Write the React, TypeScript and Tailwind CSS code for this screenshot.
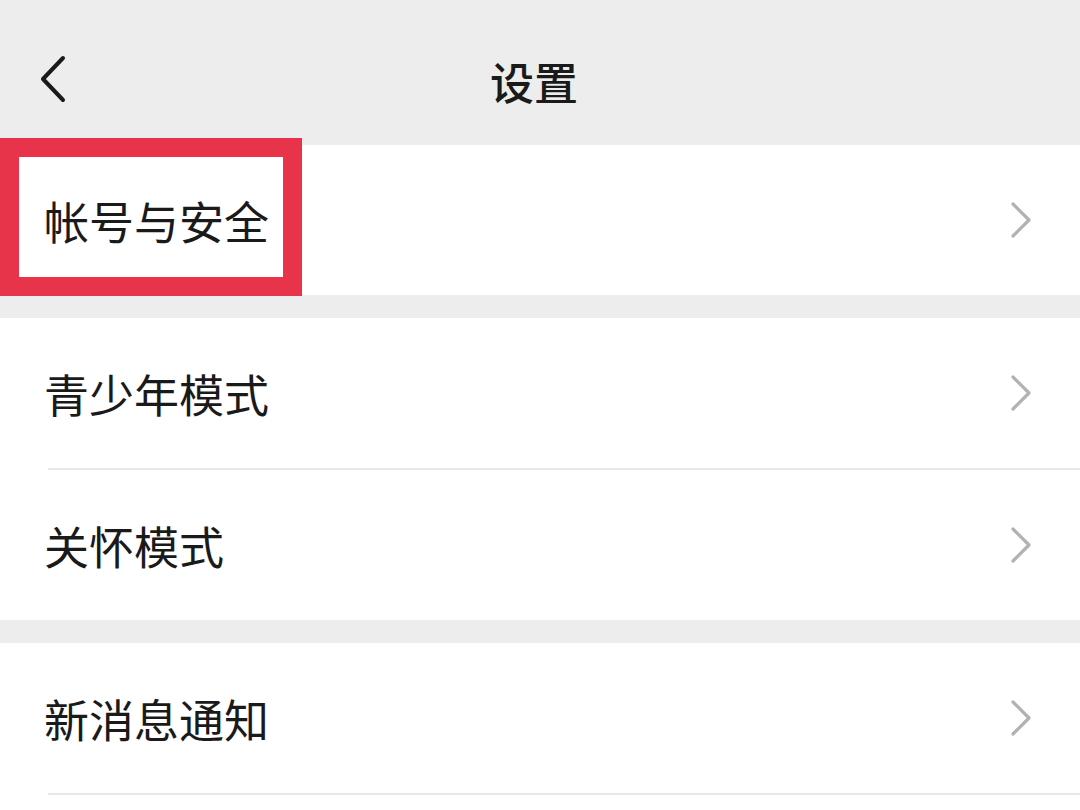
const rows: string[][] = [["帐号与安全"], ["青少年模式", "关怀模式"], ["新消息通知"]];

function Chevron() {
  return (
    <svg width="22" height="38" viewBox="0 0 22 38" className="mr-[48px] shrink-0">
      <path d="M3 3 L19 19 L3 35" fill="none" stroke="#b2b2b2" strokeWidth="3.2" strokeLinecap="round" strokeLinejoin="round" />
    </svg>
  );
}

export default function App() {
  return (
    <div
      className="relative w-[1080px] h-[810px] overflow-hidden bg-[#ededed] text-[#1a1a1a] flex flex-col"
      style={{ fontFamily: '"Noto Sans CJK SC", "Noto Sans", sans-serif' }}
    >
      <div className="relative h-[145px] shrink-0 flex items-center justify-center">
        <svg width="30" height="48" viewBox="0 0 30 48" className="absolute left-[38px] top-[55px]">
          <path d="M25 3 L5 24 L25 45" fill="none" stroke="#1a1a1a" strokeWidth="4" strokeLinecap="round" strokeLinejoin="round" />
        </svg>
        <span className="text-[44px] font-medium mt-[16px] mr-[12px]">设置</span>
      </div>
      <div className="flex-1 flex flex-col gap-[23px]">
        {rows.map((group, gi) => (
          <div key={gi} className={gi === rows.length - 1 ? "bg-white flex-1" : "bg-white"}>
            {group.map((label, i) => (
              <div key={label}>
                {i > 0 && <div className="ml-[48px] h-[2px] bg-[#e8e8e8]" />}
                <div className="h-[150px] flex items-center justify-between pl-[44px]">
                  <span className="text-[45px] leading-none">{label}</span>
                  <Chevron />
                </div>
              </div>
            ))}
            {gi === rows.length - 1 && <div className="ml-[48px] h-[2px] bg-[#e8e8e8]" />}
          </div>
        ))}
      </div>
      <div className="absolute left-0 top-[138px] w-[302px] h-[158px] border-[19px] border-[#e8344a]" />
    </div>
  );
}
